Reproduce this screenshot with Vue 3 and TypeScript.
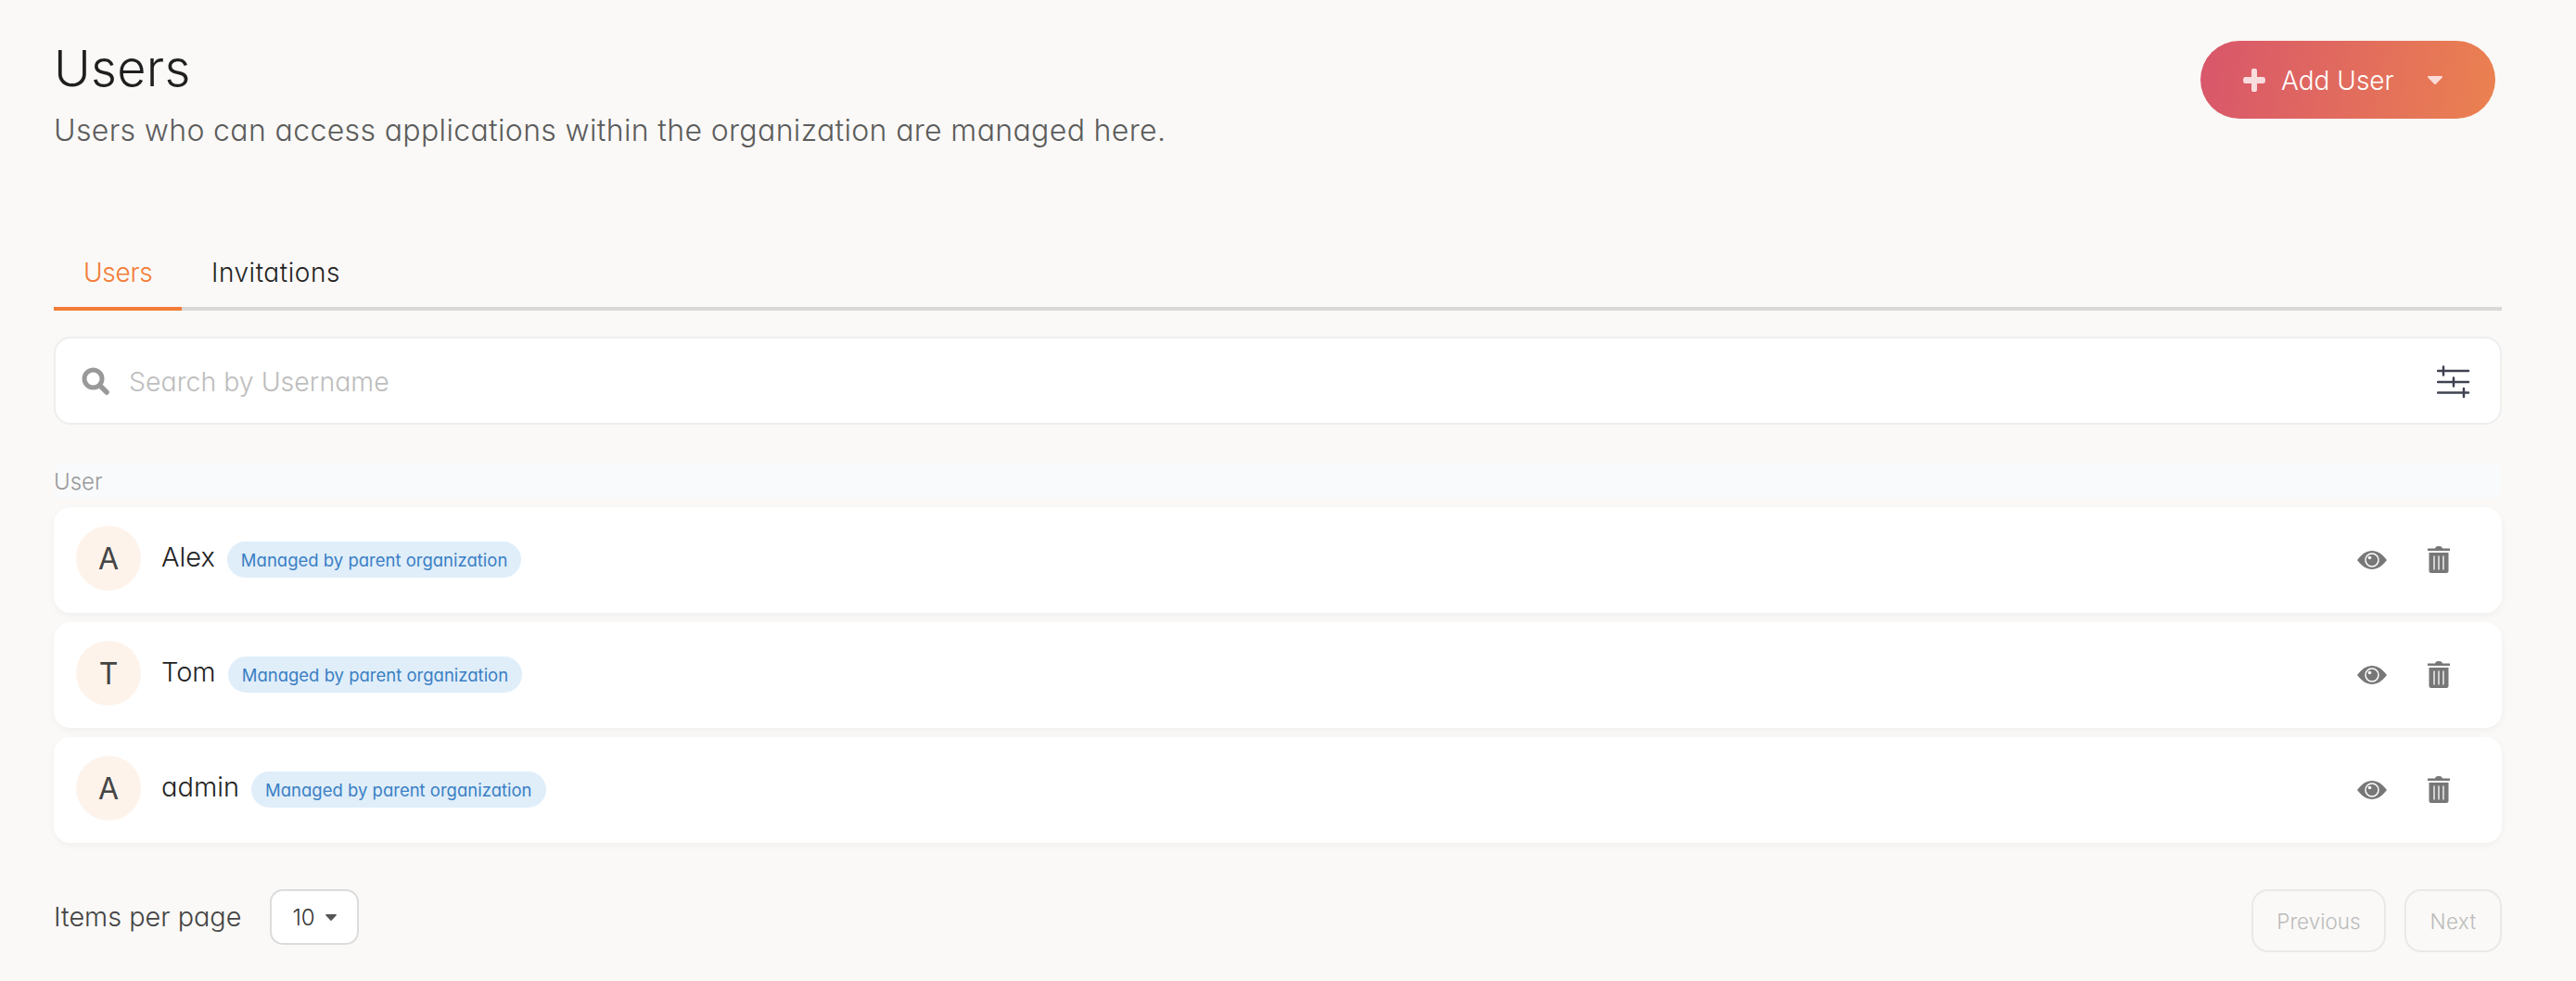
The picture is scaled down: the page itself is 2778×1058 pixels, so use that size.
<script setup lang="ts">
interface User { initial: string; name: string }
const users: User[] = [
  { initial: 'A', name: 'Alex' },
  { initial: 'T', name: 'Tom' },
  { initial: 'A', name: 'admin' },
]
</script>

<template>
  <div class="page">
    <header class="top">
      <div class="heading">
        <h1 class="title">Users</h1>
        <p class="subtitle">Users who can access applications within the organization are managed here.</p>
      </div>
      <button class="add" type="button">
        <svg class="plus" width="24" height="25" viewBox="0 0 24 25"><path d="M9 2.500A2.500 2.500 0 0 1 15 2.500V9H21.500A2.500 3.500 0 0 1 21.500 16H15V22.500A2.500 2.500 0 0 1 9 22.500V16H2.500A2.500 3.500 0 0 1 2.500 9H9Z" /></svg>
        <span class="add-label">Add User</span>
        <svg class="add-caret" width="16" height="9" viewBox="0 0 16 9"><path d="M1 0H15A1 1 0 0 1 15.700 1.700L8.700 8.700A1 1 0 0 1 7.300 8.700L.3 1.700A1 1 0 0 1 1 0Z" /></svg>
      </button>
    </header>

    <nav class="tabs">
      <span class="tab active">Users</span>
      <span class="tab second">Invitations</span>
    </nav>

    <div class="search">
      <svg class="search-icon" width="30" height="30" viewBox="0 0 30 30" fill="none" stroke="#999" stroke-linecap="round">
        <circle cx="12.500" cy="12.500" r="9.500" stroke-width="5" />
        <path d="M20 20L27 27" stroke-width="5.500" />
      </svg>
      <span class="placeholder">Search by Username</span>
      <svg class="filter" width="36" height="36" viewBox="0 0 36 36" fill="none" stroke="#3f4250" stroke-width="2.500" stroke-linecap="round">
        <path d="M1 6H34M1 18H34M1 29.500H34M7 1.500V10.500M18 13.500V22.500M29 25V34" />
      </svg>
    </div>

    <div class="table-head">User</div>

    <div class="rows">
      <div v-for="user in users" :key="user.name" class="row">
        <div class="avatar">{{ user.initial }}</div>
        <span class="name">{{ user.name }}</span>
        <span class="chip">Managed by parent organization</span>
        <div class="actions">
          <svg class="eye" width="32" height="20" viewBox="0 0 32 20">
            <path d="M0 10C5 3.500 10 0 16 0S27 3.500 32 10C27 16.500 22 20 16 20S5 16.500 0 10Z" fill="#777" />
            <circle cx="16" cy="10" r="7" fill="#777" stroke="#fff" stroke-width="1.500" />
            <circle cx="13.500" cy="7.500" r="1.800" fill="#fff" />
          </svg>
          <svg class="trash" width="24" height="29" viewBox="0 0 24 29">
            <path d="M0 2.500H8C8.500 .8 9.500 0 12 0S15.500 .8 16 2.500H24V5H0Z" fill="#777" />
            <path d="M1.500 7H22.500V26.500A2.500 2.500 0 0 1 20 29H4A2.500 2.500 0 0 1 1.500 26.500Z" fill="#777" />
            <path d="M7 10.500V25.500M12 10.500V25.500M17 10.500V25.500" stroke="#fff" stroke-width="1.300" fill="none" />
          </svg>
        </div>
      </div>
    </div>

    <footer class="pager">
      <span class="per-page">Items per page</span>
      <div class="select">
        <span>10</span>
        <svg width="12" height="7" viewBox="0 0 12 7"><path d="M.8 0H11.200A.7 .7 0 0 1 11.700 1.200L6.500 6.700A.7 .7 0 0 1 5.500 6.700L.3 1.200A.7 .7 0 0 1 .8 0Z" fill="#555" /></svg>
      </div>
      <div class="pager-nav">
        <button class="nav prev" type="button" disabled>Previous</button>
        <button class="nav next" type="button" disabled>Next</button>
      </div>
    </footer>
  </div>
</template>

<style>
html, body { margin: 0; background: #faf9f7; }
</style>

<style scoped>
.page {
  box-sizing: border-box;
  width: 2778px;
  height: 1058px;
  padding: 44px 80px 0 58px;
  overflow: hidden;
  background: #faf9f7;
  font-family: Inter, "Liberation Sans", sans-serif;
  font-feature-settings: "cv11" 1;
  font-weight: 300;
  color: #222;
}
.top { display: flex; justify-content: space-between; align-items: flex-start; height: 216px; }
.title { margin: 0; font-size: 54px; line-height: 60px; letter-spacing: .3px; font-weight: 300; color: #1f1f1f; }
.subtitle { margin: 17px 0 0; font-size: 32px; line-height: 40px; letter-spacing: .36px; color: #5c5c5c; }
.add {
  display: flex; align-items: center;
  box-sizing: border-box;
  width: 318px; height: 84px;
  margin-right: 7px;
  padding: 2px 0 0 46px;
  border: 0; border-radius: 42px;
  background: linear-gradient(100deg, #d8566b 0%, #eb8150 100%);
  color: #fff;
  font: inherit;
  font-feature-settings: inherit;
  font-size: 28px;
}
.plus { fill: #f9dcde; flex: none; margin-top: -2px; }
.add-label { margin-left: 17px; }
.add-caret { fill: #fbdcd8; margin-left: 36px; margin-top: -2px; flex: none; }

.tabs { display: flex; height: 71px; border-bottom: 4px solid #d9d9d9; }
.tab { display: flex; align-items: center; box-sizing: border-box; height: 75px; padding: 0 32px 3px; font-size: 28px; color: #222; border-bottom: 4px solid transparent; }
.tab.active { width: 138px; letter-spacing: -.3px; color: #f47c36; border-bottom-color: #f47c36; }
.tab.second { letter-spacing: .55px; }

.search {
  display: flex; align-items: center;
  box-sizing: border-box;
  height: 95px;
  margin-top: 28px;
  padding: 0 32px 0 28px;
  background: #fff;
  border: 2px solid #eeeeee;
  border-radius: 18px;
}
.search-icon { flex: none; }
.placeholder { margin-left: 21px; padding-top: 2px; font-size: 28.500px; color: #bdbdbd; }
.filter { margin-left: auto; margin-top: 2px; flex: none; }

.table-head {
  height: 37px; line-height: 39px;
  margin-top: 42px;
  font-size: 24px; color: #999;
  background: #f9fafb;
  border-radius: 6px;
}
.rows { display: flex; flex-direction: column; gap: 10px; margin-top: 10px; }
.row {
  display: flex; align-items: center;
  box-sizing: border-box;
  height: 114px;
  padding: 0 56px 4px 24px;
  background: #fff;
  border-radius: 18px;
  box-shadow: 0 3px 8px rgba(0, 0, 0, .04);
}
.avatar {
  display: flex; align-items: center; justify-content: center;
  width: 70px; height: 70px;
  border-radius: 50%;
  background: #fdf3eb;
  font-size: 32px; font-weight: 400; color: #444;
  flex: none;
}
.name { margin-left: 22px; margin-bottom: 4px; font-size: 29px; color: #222; }
.chip {
  display: flex; align-items: center;
  height: 39px;
  margin-left: 13px;
  margin-top: 3px;
  padding: 0 15px;
  border-radius: 20px;
  background: #e0eefa;
  color: #3a7fc4;
  font-size: 18.500px; font-weight: 400;
}
.actions { display: flex; align-items: center; gap: 44px; margin-left: auto; margin-top: 3px; }

.pager { display: flex; align-items: center; height: 68px; margin-top: 50px; }
.per-page { font-size: 28.800px; color: #444; margin-bottom: 10px; }
.select {
  display: flex; align-items: center; justify-content: space-between;
  box-sizing: border-box;
  width: 96px; height: 60px;
  margin-left: 31px; margin-bottom: 8px;
  padding: 0 22px;
  background: #fff;
  border: 2px solid #dcdcdc;
  border-radius: 14px;
  font-size: 24px; color: #333;
}
.pager-nav { display: flex; gap: 20px; margin-left: auto; }
.nav {
  height: 68px;
  background: transparent;
  border: 2px solid #e9e9e9;
  border-radius: 18px;
  font: inherit;
  font-size: 22.500px;
  font-feature-settings: inherit;
  color: #bbb;
}
.prev { width: 145px; }
.next { width: 105px; letter-spacing: .3px; }
</style>
